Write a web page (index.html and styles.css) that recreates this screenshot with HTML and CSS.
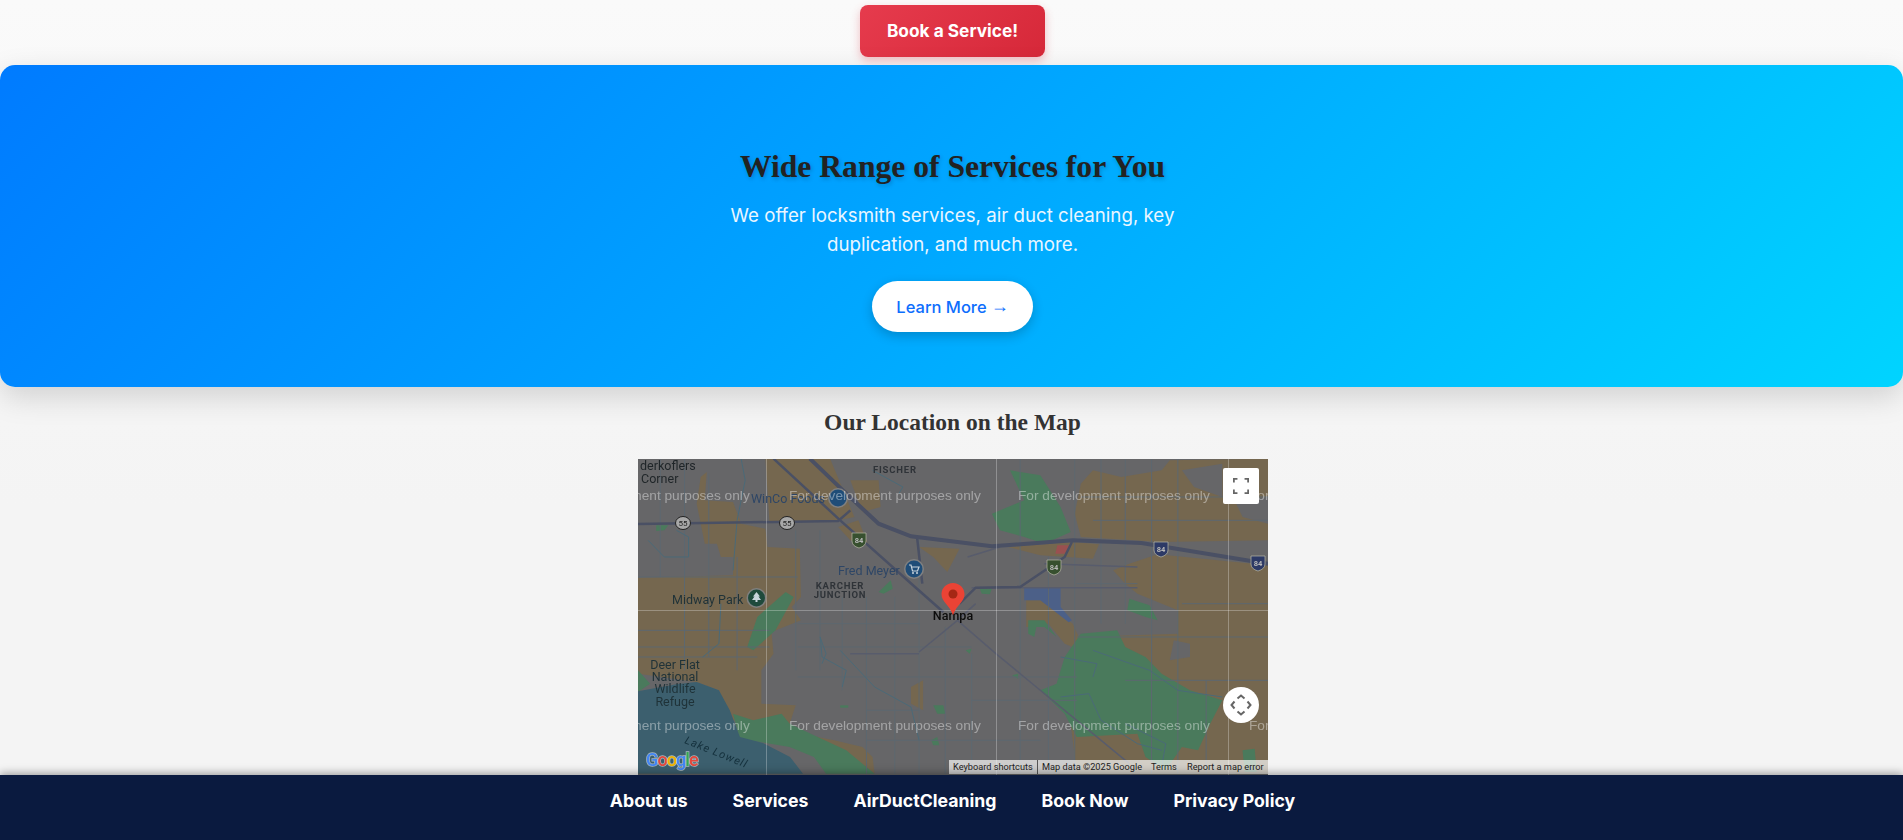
FILE: index.html
```html
<!DOCTYPE html>
<html lang="en">
<head>
<meta charset="utf-8">
<title>Services</title>
<link rel="stylesheet" href="styles.css">
</head>
<body>
<main class="page">
  <div class="cta-row"><a class="cta" href="#">Book a Service!</a></div>
  <section class="hero">
    <h2 class="hero-title">Wide Range of Services for You</h2>
    <p class="hero-text">We offer locksmith services, air duct cleaning, key<br>duplication, and much more.</p>
    <a class="hero-btn" href="#">Learn More <span class="arrow">→</span></a>
  </section>
  <h3 class="map-title">Our Location on the Map</h3>
  <div class="map">
    <svg class="map-svg" viewBox="0 0 630 316" width="630" height="316" aria-label="Map of Nampa">
      <rect class="gray" width="630" height="316"/>
      <g transform="translate(-2,-2) scale(.40437,.33333)">
        <g class="tan">
          <path d="M160 60L175 45L170 130L240 135L260 200L320 215L325 270L405 275L408 420L385 450L408 490L335 525L340 590L310 640L310 740L395 745L380 800L300 800L240 790L205 700L150 675L5 650L5 362L240 355L240 300L210 300L200 260L170 260L160 200L150 140Z"/>
          <path d="M320 5L480 5L540 180L500 190L330 195Z"/>
          <path d="M530 70L600 70L605 150L560 165Z"/>
          <path d="M500 210L550 190L575 265L530 250Z"/>
          <path d="M700 270L800 275L770 345L735 300Z"/>
          <path d="M920 270L1000 295L1130 305L1145 262L1080 255Z"/>
          <path d="M1100 80L1130 40L1200 60L1300 40L1320 10L1563 5L1563 250L1300 255L1100 240L1085 170Z"/>
          <path d="M1180 340L1220 320L1290 292L1563 325L1563 950L1090 950L1075 800L1105 720L1090 540L1340 530L1340 460L1240 410L1210 380Z"/>
          <path d="M965 430L1000 430L1080 500L1095 540L1100 580L1060 560L1020 500L965 510Z"/>
          <path d="M440 838L490 850L560 870L585 900L590 950L560 925L500 875Z"/>
          <path d="M680 690L710 670L710 760L680 740Z"/>
          <path d="M5 915L60 925L70 950L5 950Z"/>
        </g>
        <g class="gray">
          <path d="M1350 40L1450 20L1450 120L1380 90Z"/>
          <path d="M1480 130L1563 120L1563 200L1500 180Z"/>
          <path d="M1330 550L1370 560L1370 600L1320 610Z"/>
        </g>
        <g class="green">
          <path d="M880 170L960 130L925 40L1000 55L1050 150L1075 225L1010 260L960 240L900 220Z"/>
          <path d="M275 570L300 480L370 405L390 420L345 520L290 580Z"/>
          <path d="M600 405L630 370L635 395L612 410Z"/>
          <path d="M1000 700L1040 680L1060 600L1100 530L1190 520L1210 570L1260 600L1300 650L1370 700L1450 730L1420 800L1390 880L1350 870L1310 940L1260 900L1240 830L1090 840L1060 770Z"/>
          <path d="M970 490L1010 490L1040 540L1010 510L990 510L985 540L970 530Z"/>
          <path d="M1220 425L1270 445L1290 490L1260 480L1215 460Z"/>
          <path d="M240 770L290 790L360 770L380 800L440 835L520 880L560 920L590 950L470 950L440 900L380 870L280 850L255 840Z"/>
          <path d="M5 640L35 680L5 705Z"/>
          <path d="M50 205L80 205L70 220L50 222Z"/>
          <path d="M735 745L760 745L765 770L745 770Z"/>
          <path d="M505 745L525 745L525 752L505 752Z"/>
          <path d="M850 395L880 395L875 412L855 410Z"/>
          <path d="M1500 880L1530 875L1535 945L1505 945Z"/>
          <path d="M815 580L830 575L825 590Z"/>
          <path d="M930 655L945 650L945 665Z"/>
          <path d="M730 850L745 840L750 865L735 865Z"/>
        </g>
        <path class="water" d="M5 703L100 682L150 675L205 700L232 760L257 840L314 858L381 900L413 950L5 950Z"/>
        <path class="lot" d="M960 393L1050 393L1050 450L1078 490L1070 496L1000 430L960 430Z"/>
        <path class="red" d="M1042 265L1072 265L1060 290L1037 290Z"/>
        <path class="grid" d="M60 5V360M120 5V640M180 50V600M250 300V640M395 220V640M455 220V640M510 420V700M570 420V950M640 420V950M700 240V950M765 510V950M830 590V950M950 5V950M1020 300V950M1085 5V950M1150 5V500M1210 5V500M1275 5V950M1340 5V950M1410 670V950M5 360H400M5 520H330M5 570H330M400 500H700M400 570H830M400 660H1090M830 730H1090M5 600H300M570 760H700M570 850H1000M1090 540H1563M1090 380H1240M1210 670H1563M1350 440H1563M1100 120H1563M1130 190H1563"/>
        <path class="stream" d="M260 5L270 70L250 190L240 340M210 440L205 560L165 600M455 540L470 590L460 620M505 580L590 690L680 750L700 850M585 40L660 90L650 110M1050 600L1140 620L1130 660M1050 720L1120 710L1150 790L1240 860L1300 880M1130 580L1270 640L1340 700L1450 720M100 220L130 240L130 300L70 300L30 250M456 540L460 600L520 640L510 690M1210 800L1310 860L1300 930"/>
        <path class="road-thin" d="M700 585L795 490L840 440M795 490L890 590L960 660L1220 920M700 590L530 590M820 300L900 270M1010 320L1240 330M830 392L1240 392"/>
        <path class="road" d="M5 201L500 192L530 160M340 5L505 190L690 390L760 465M695 240L708 380M800 440L840 392L950 390L1060 300L1078 255"/>
        <path class="road-main" d="M430 5L520 110L600 200L680 238L880 268L1080 250L1250 258L1563 320"/>
      </g>
      <g class="grid-white">
        <line x1="128.500" y1="0" x2="128.500" y2="316"/>
        <line x1="358.500" y1="0" x2="358.500" y2="316"/>
        <line x1="590.500" y1="0" x2="590.500" y2="316"/>
        <line x1="0" y1="151.500" x2="630" y2="151.500"/>
      </g>
      <g class="shield-55">
        <ellipse cx="45" cy="64" rx="7.500" ry="6.500"/><text x="45" y="67">55</text>
        <ellipse cx="149" cy="64" rx="7.500" ry="6.500"/><text x="149" y="67">55</text>
      </g>
      <g class="shield-i">
        <path class="sh-green" d="M214 74h14v8q0 5-7 7q-7-2-7-7z"/><text x="221" y="84">84</text>
        <path class="sh-green" d="M409 101h14v8q0 5-7 7q-7-2-7-7z"/><text x="416" y="111">84</text>
        <path class="sh-blue" d="M516 83h14v8q0 5-7 7q-7-2-7-7z"/><text x="523" y="93">84</text>
        <path class="sh-blue" d="M613 97h14v8q0 5-7 7q-7-2-7-7z"/><text x="620" y="107">84</text>
      </g>
      <g class="labels">
        <text class="l-dark" x="2" y="11">derkoflers</text>
        <text class="l-dark" x="0" y="24">&#160;Corner</text>
        <text class="l-caps" x="235" y="14">FISCHER</text>
        <text class="l-blue" x="113" y="44">WinCo Foods</text>
        <text class="l-blue" x="200" y="116">Fred Meyer</text>
        <text class="l-caps mid" x="202" y="130">KARCHER</text>
        <text class="l-caps mid" x="202" y="138.500">JUNCTION</text>
        <text class="l-park" x="34" y="145">Midway Park</text>
        <text class="l-park mid" x="37" y="210">Deer Flat</text>
        <text class="l-park mid" x="37" y="222">National</text>
        <text class="l-park mid" x="37" y="234">Wildlife</text>
        <text class="l-park mid" x="37" y="247">Refuge</text>
        <text class="l-lake" transform="translate(46,284) rotate(22)">Lake Lowell</text>
        <text class="l-town mid" x="315" y="161">Nampa</text>
      </g>
      <g class="pois">
        <circle class="poi-ring" cx="200" cy="39" r="10"/><circle class="poi-blue" cx="200" cy="39" r="8.500"/>
        <circle class="poi-ring" cx="276" cy="110" r="10"/><circle class="poi-blue" cx="276" cy="110" r="8.500"/>
        <path class="poi-glyph" d="M271 106h2l1.500 6h5l1.500-4h-7"/><circle class="poi-dot" cx="275" cy="114" r="1"/><circle class="poi-dot" cx="279" cy="114" r="1"/>
        <circle class="poi-ring" cx="118.500" cy="139" r="10"/><circle class="poi-park" cx="118.500" cy="139" r="8.500"/>
        <path class="poi-tree" d="M118.500 133l-3.500 4.500h1.500l-2.500 3.500h3.500v2h2v-2h3.500l-2.500-3.500h1.500z"/>
      </g>
      <path class="pin" d="M315 124c-6.500 0-11.500 5-11.500 11.200c0 7.500 8 10.500 11.500 21c3.500-10.500 11.500-13.500 11.500-21c0-6.200-5-11.200-11.500-11.200z"/>
      <circle class="pin-dot" cx="315" cy="135" r="4.500"/>
      <g class="watermark">
        <text x="-80" y="41">For development purposes only</text>
        <text x="151" y="41">For development purposes only</text>
        <text x="380" y="41">For development purposes only</text>
        <text x="611" y="41">For development purposes only</text>
        <text x="-80" y="271">For development purposes only</text>
        <text x="151" y="271">For development purposes only</text>
        <text x="380" y="271">For development purposes only</text>
        <text x="611" y="271">For development purposes only</text>
      </g>
      <text class="google" x="8" y="307"><tspan class="g-b">G</tspan><tspan class="g-r">o</tspan><tspan class="g-y">o</tspan><tspan class="g-b">g</tspan><tspan class="g-g">l</tspan><tspan class="g-r">e</tspan></text>
    </svg>
    <button class="map-ctl map-full" type="button" aria-label="Toggle fullscreen">
      <svg viewBox="0 0 18 18" width="16" height="16"><path d="M1 5V1h4M13 1h4v4M17 13v4h-4M5 17H1v-4"/></svg>
    </button>
    <button class="map-ctl map-pan" type="button" aria-label="Pan">
      <svg viewBox="0 0 22 22" width="22" height="22"><path d="M7.500 4.500L11 1.500l3.500 3M4.500 7.500L1.500 11l3 3.500M17.500 7.500l3 3.500-3 3.500M7.500 17.500l3.500 3 3.500-3"/></svg>
    </button>
    <div class="map-attr">
      <span class="attr-keys">Keyboard shortcuts</span>
      <span class="attr-data">Map data ©2025 Google</span>
      <span class="attr-terms">Terms</span>
      <span class="attr-report">Report a map error</span>
    </div>
  </div>
</main>
<footer class="footer">
  <a href="#">About us</a>
  <a href="#">Services</a>
  <a href="#">AirDuctCleaning</a>
  <a href="#">Book Now</a>
  <a href="#">Privacy Policy</a>
</footer>
</body>
</html>
```
FILE: styles.css
```css
* { box-sizing: border-box; }
html, body { margin: 0; height: 840px; overflow: hidden; }
body {
  display: flex;
  flex-direction: column;
  background: linear-gradient(to bottom, #fafafa, #f4f4f4 60%);
  font-family: Inter, "Noto Sans", sans-serif;
}
a { text-decoration: none; }
.page { flex: 1; display: flex; flex-direction: column; align-items: center; }

.cta-row { padding: 5px 0 0 2px; height: 65px; }
.cta {
  display: flex; align-items: center; justify-content: center;
  width: 185px; height: 52px; border-radius: 8px;
  padding-bottom: 2px;
  background: linear-gradient(135deg, #e63b4d, #d62839);
  color: #fff; font-weight: 700; font-size: 17.300px;
  box-shadow: 0 4px 10px rgba(220, 53, 69, .3);
}

.hero {
  width: 100%; height: 322px;
  border-radius: 15px;
  background: linear-gradient(135deg, #007bff, #00d4ff);
  box-shadow: 0 10px 30px rgba(0, 0, 0, .15);
  display: flex; flex-direction: column; align-items: center;
  padding: 83px 0 0 2px;
  text-align: center;
}
.hero-title {
  margin: 0;
  font: 700 31.600px/38px "Liberation Serif", serif;
  color: #222;
  text-shadow: 1px 2px 4px rgba(0, 0, 0, .2);
}
.hero-text {
  margin: 15px 0 0;
  font-size: 18.700px; line-height: 29px; font-weight: 400;
  color: #eaf6ff;
}
.hero-btn {
  margin-top: 22px;
  display: flex; align-items: center; justify-content: center; gap: 4px;
  width: 161px; height: 51px; border-radius: 26px;
  background: #fff; color: #0d6efd;
  font-size: 16.500px; font-weight: 500;
  box-shadow: 0 4px 12px rgba(0, 0, 0, .2);
}
.arrow { font-family: "Liberation Serif", serif; font-weight: 400; font-size: 18px; }

.map-title {
  margin: 0; height: 72px; padding: 20px 0 0 2px;
  font: 700 23.500px/30px "Liberation Serif", serif;
  color: #333;
}

.map { position: relative; width: 630px; height: 316px; margin-left: 3px; overflow: hidden; }
.map-svg { display: block; filter: blur(.4px); }
.gray { fill: #666668; }
.tan { fill: #75674f; }
.green { fill: #4a7a5c; }
.water { fill: #3c5f6e; }
.lot { fill: #4c6088; }
.red { fill: #9a5050; }
.grid, .stream, .road-thin, .road, .road-main { fill: none; vector-effect: non-scaling-stroke; }
.grid { stroke: #5d6870; stroke-width: 1; }
.stream { stroke: #4b6a78; stroke-width: 1; }
.road-thin { stroke: #585c6c; stroke-width: 1.500; }
.road { stroke: #4a5064; stroke-width: 2.500; }
.road-main { stroke: #4a5064; stroke-width: 4; }
.grid-white line { stroke: rgba(255, 255, 255, .28); stroke-width: 1; }

.map-svg text { font-family: Roboto, sans-serif; }
.mid { text-anchor: middle; }
.shield-55 ellipse { fill: #a8a8a8; stroke: #222; stroke-width: 1; }
.shield-55 text { font-size: 8px; text-anchor: middle; fill: #222; }
.sh-green { fill: #37502f; stroke: #b9b9a8; stroke-width: .7; }
.sh-blue { fill: #2d3a66; stroke: #b9b9a8; stroke-width: .7; }
.shield-i text { font-size: 7.500px; font-weight: 700; text-anchor: middle; fill: #b8b8b8; }
.l-dark { font-size: 12.500px; fill: #1f2528; }
.l-caps { font-size: 9.500px; font-weight: 700; letter-spacing: .8px; fill: #2f3338; }
.l-blue { font-size: 12.500px; fill: #2e4666; }
.l-park { font-size: 12.500px; fill: #1f3238; }
.l-lake { font-size: 11px; letter-spacing: 1px; font-style: italic; fill: #14303c; }
.l-town { font-size: 12.500px; font-weight: 500; fill: #0c0c0c; }
.poi-ring { fill: #808080; }
.poi-blue { fill: #1f4d78; }
.poi-park { fill: #1f4a3c; }
.poi-glyph { fill: none; stroke: #c8d4dc; stroke-width: 1.200; }
.poi-dot, .poi-tree { fill: #c8d4dc; }
.pin { fill: #ea4335; }
.pin-dot { fill: #a52714; }
.watermark text {
  font-family: "Liberation Sans", sans-serif;
  font-size: 13.700px; fill: rgba(255, 255, 255, .4);
}
.map-svg .google {
  font-family: Roboto, sans-serif;
  font-size: 18px; font-weight: 500; letter-spacing: -.9px;
  stroke: rgba(255, 255, 255, .55); stroke-width: 1.400px; paint-order: stroke;
}
.g-b { fill: #4285f4; }
.g-r { fill: #e5483c; }
.g-y { fill: #f0b400; }
.g-g { fill: #34a853; }

.map-ctl {
  position: absolute; right: 9px; width: 36px; height: 36px; padding: 0;
  border: 0; background: #fff;
  display: flex; align-items: center; justify-content: center;
}
.map-ctl svg { fill: none; stroke: #666; stroke-width: 2; }
.map-full { top: 9px; border-radius: 2px; }
.map-pan { top: 228px; border-radius: 50%; }
.map-attr {
  position: absolute; right: 0; bottom: 1px; left: 311px; height: 14px;
  display: flex; align-items: center;
  background: rgba(255, 255, 255, .68);
  font: 9.200px/14px Roboto, sans-serif; color: #222;
  white-space: nowrap; padding-left: 4px;
}
.map-attr span { flex: none; }
.attr-keys { width: 85px; border-right: 1px solid #555; }
.attr-data { margin-left: 4px; width: 109px; }
.attr-terms { width: 36px; }

.footer {
  position: relative; flex: none;
  height: 65px; padding: 14px 0 0 2px;
  display: flex; justify-content: center; gap: 45px;
  background: #0a1a3f;
  box-shadow: 0 -2px 8px rgba(0, 0, 0, .35);
}
.footer a { color: #fff; font-size: 17.700px; font-weight: 700; line-height: 24px; }
```
